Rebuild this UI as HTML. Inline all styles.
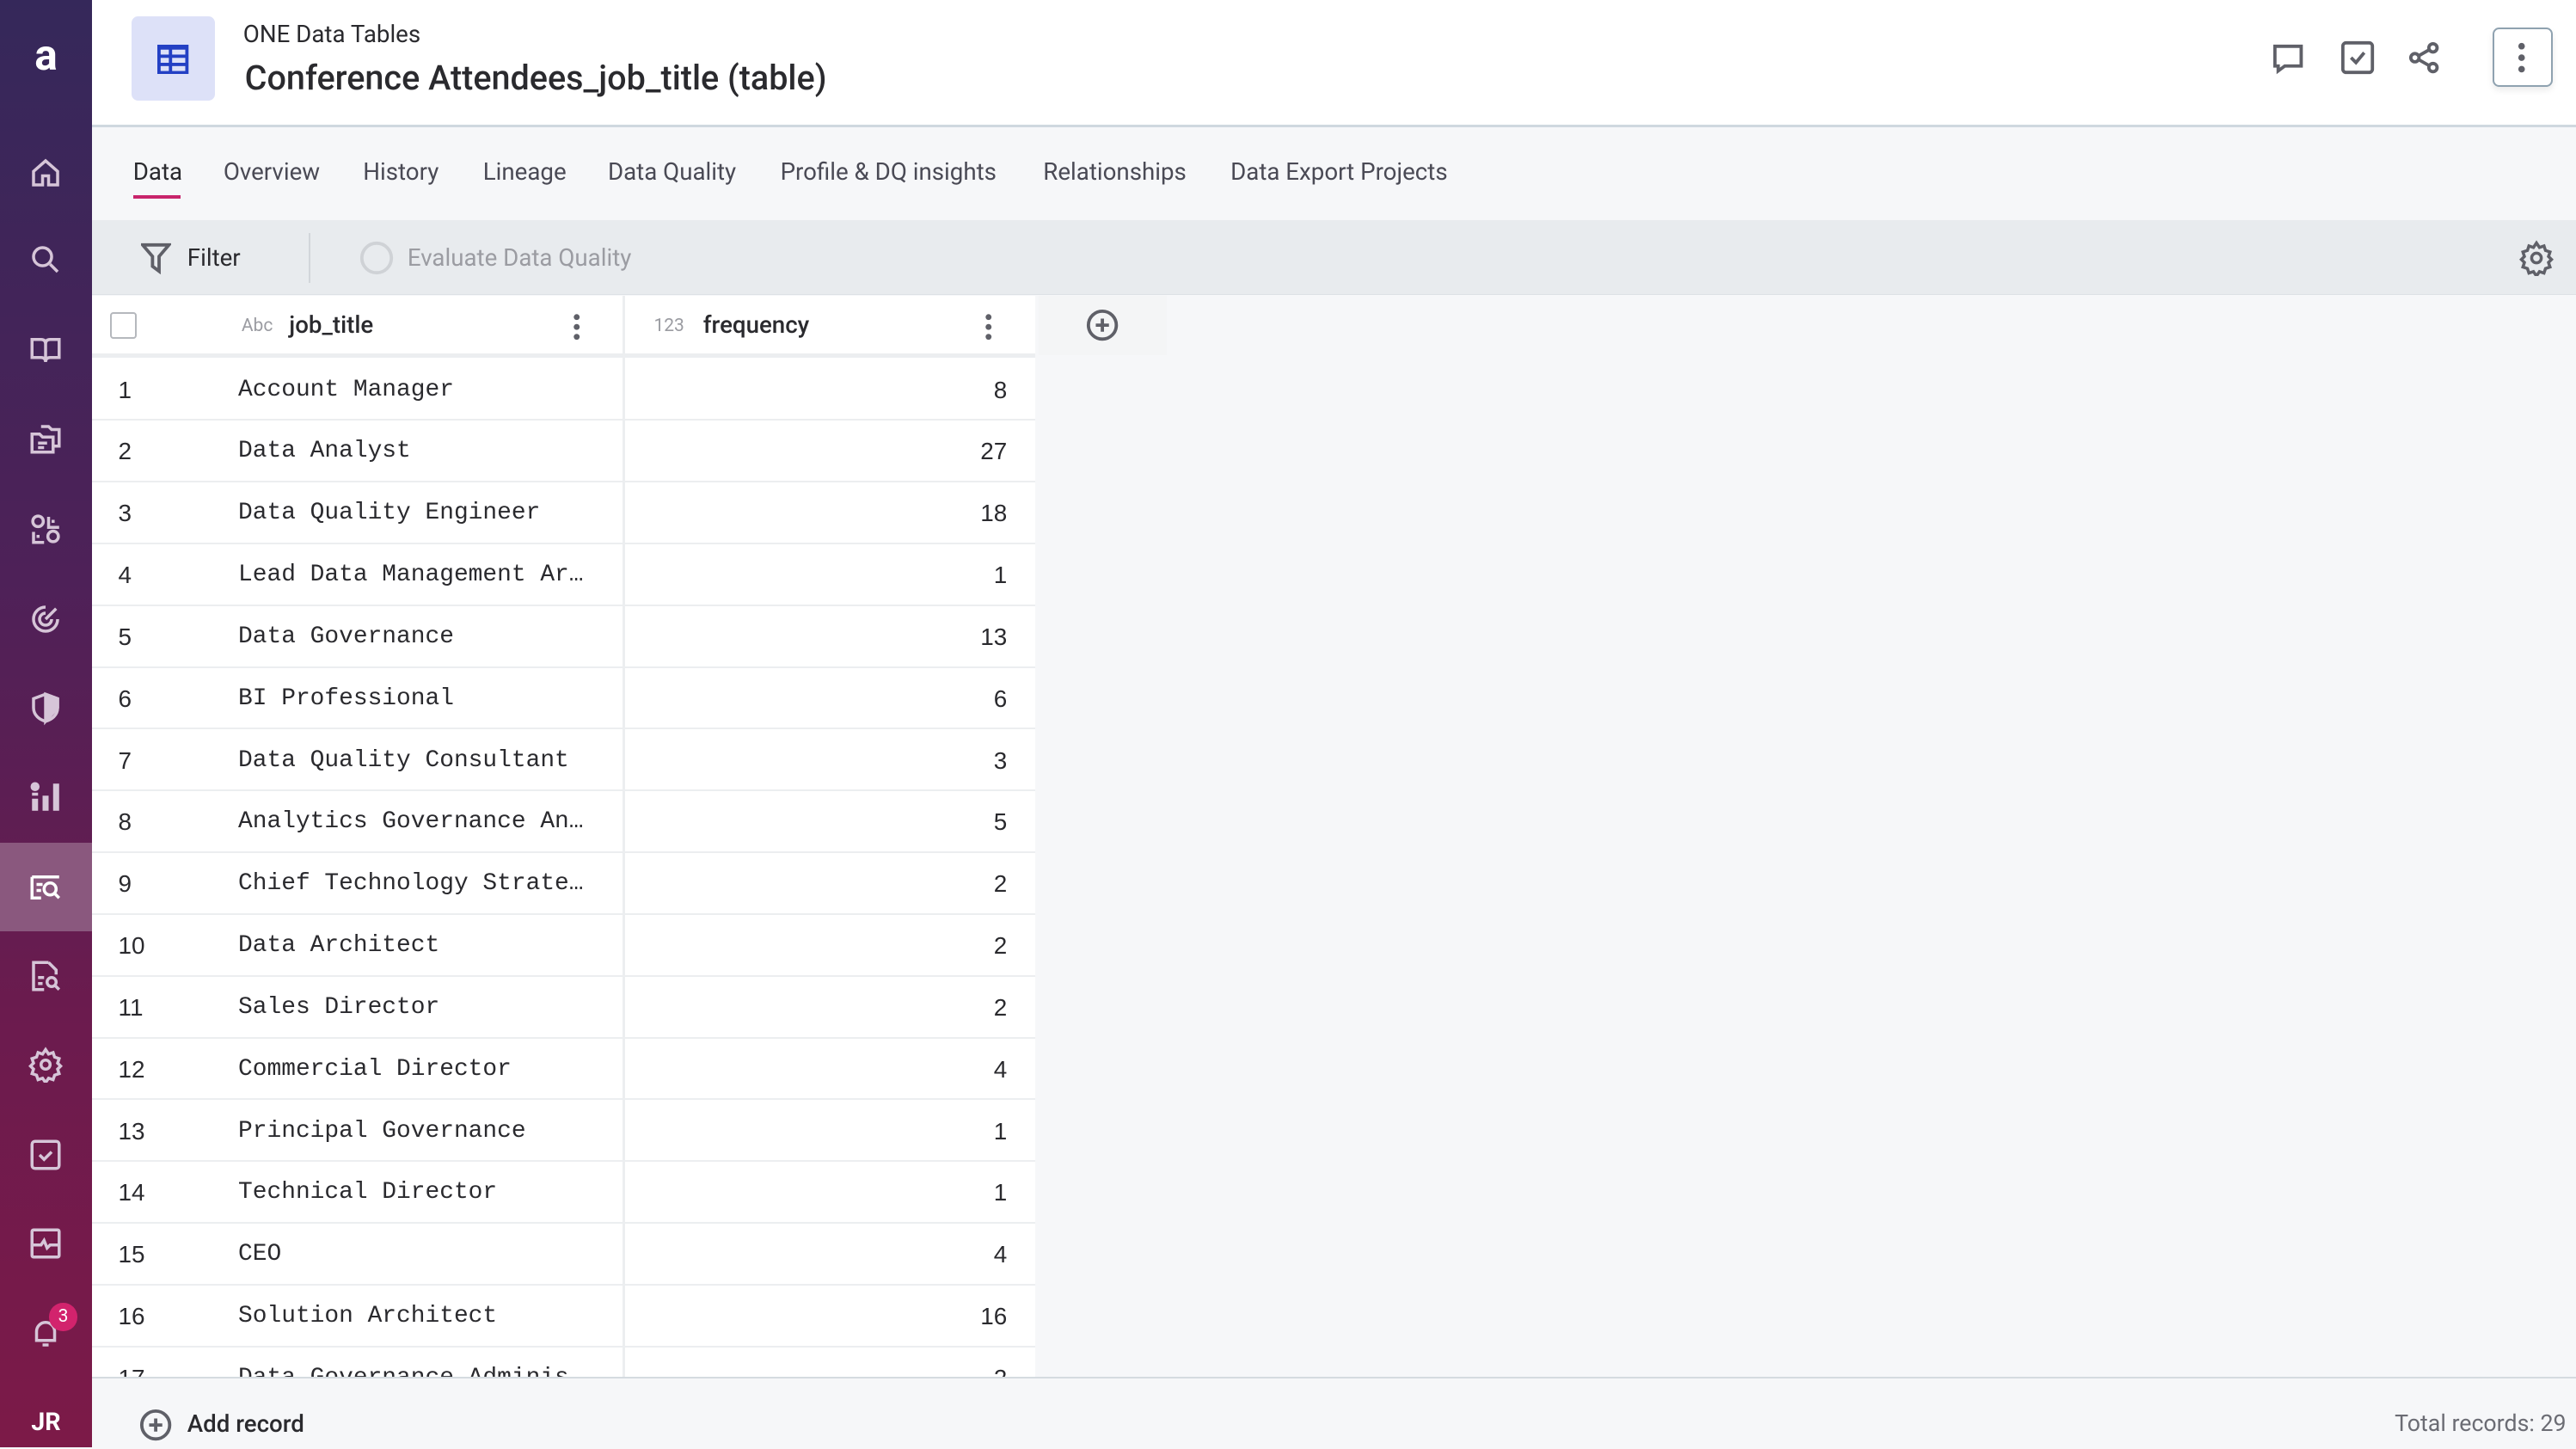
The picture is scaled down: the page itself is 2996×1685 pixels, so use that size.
<!DOCTYPE html>
<html><head><meta charset="utf-8"><style>
html,body{margin:0;padding:0;}
body{width:1568px;height:881px;zoom:1.91071;overflow:hidden;position:relative;font-family:"Roboto","Liberation Sans",sans-serif;background:#f6f7f9;color:#2a2a2e;}
.side{position:absolute;left:0;top:0;width:56px;height:881px;background:linear-gradient(180deg,#35285a 0%,#4e2158 40%,#6b1b4e 70%,#7c1a48 100%);}
.side .ic{position:absolute;left:0;width:56px;height:54px;display:flex;align-items:center;justify-content:center;}
.side svg{width:22px;height:22px;fill:none;stroke:#d6c5d8;stroke-width:2;}
.act{background:#8a587e;}
.hdr{position:absolute;left:56px;top:0;right:0;height:76px;background:#fff;border-bottom:2px solid #cfd8df;}
.tabs{position:absolute;left:56px;top:78px;right:0;height:56px;background:#f6f7f9;}
.tabs span{position:absolute;top:18px;font-size:14.5px;color:#4a4a55;}
.tb{position:absolute;left:56px;top:134px;right:0;height:45px;background:#e8ebee;border-bottom:1px solid #dde1e5;}
.tbl{position:absolute;left:56px;top:180px;width:574px;height:658px;background:#fff;overflow:hidden;}
.row{position:absolute;left:0;width:574px;height:37px;border-bottom:1.5px solid #eceef0;font-family:"Liberation Mono",monospace;font-size:14.6px;color:#2a2a2e;}
.row .n{position:absolute;left:16px;top:11px;font-family:"Liberation Sans",sans-serif;}
.row .t{position:absolute;left:89px;top:11px;}
.row .v{position:absolute;right:17px;top:11px;font-family:"Liberation Sans",sans-serif;}
.vl{position:absolute;left:323px;top:0;width:1.5px;height:658px;background:#eceef0;}
.foot{position:absolute;left:56px;top:838px;right:0;height:43px;background:#f6f7f9;border-top:1.5px solid #d5dbe0;}
.g{fill:none;stroke:#5f6068;stroke-width:2;}
</style></head><body>
<div class="side">
 <div style="position:absolute;left:0;top:14px;width:56px;text-align:center;color:#fff;font-size:26px;font-weight:bold;line-height:40px;">a</div>
 <div class="ic" style="top:78px"><svg viewBox="0 0 24 24"><path d="M4 11L12 4l8 7v9h-6v-6h-4v6H4z"/></svg></div>
 <div class="ic" style="top:131px"><svg viewBox="0 0 24 24"><circle cx="10" cy="10" r="6"/><path d="M15 15l5 5"/></svg></div>
 <div class="ic" style="top:186px"><svg viewBox="0 0 24 24"><path d="M3 5h6c2 0 3 1 3 3v12c0-2-1-3-3-3H3zM21 5h-6c-2 0-3 1-3 3v12c0-2 1-3 3-3h6z"/></svg></div>
 <div class="ic" style="top:240px"><svg viewBox="0 0 24 24"><path d="M9 4h5l2 2h5v11h-4M3 9h5l2 2h7v10H3z M7 15h6M7 18h4"/></svg></div>
 <div class="ic" style="top:295px"><svg viewBox="0 0 24 24"><circle cx="7" cy="7" r="3.5"/><circle cx="17" cy="17" r="3.5"/><path d="M14 4v7h7M4 14v7h7M17 6v2M7 16v2"/></svg></div>
 <div class="ic" style="top:350px"><svg viewBox="0 0 24 24"><path d="M20 12a8 8 0 1 1-8-8M16 12a4 4 0 1 1-4-4M12 12l7-7"/></svg></div>
 <div class="ic" style="top:404px"><svg viewBox="0 0 24 24"><path d="M12 3l8 3v6c0 5-4 8-8 9-4-1-8-4-8-9V6z"/><path d="M12 3v18l8-9V6z" fill="#d6c5d8"/></svg></div>
 <div class="ic" style="top:458px"><svg viewBox="0 0 24 24" style="stroke:none;fill:#d6c5d8"><circle cx="5" cy="5" r="3"/><rect x="3" y="9" width="4" height="2"/><rect x="3" y="13" width="4" height="8"/><rect x="10" y="11" width="4" height="10"/><rect x="17" y="3" width="4" height="18"/></svg></div>
 <div class="ic act" style="top:513px"><svg viewBox="0 0 24 24" style="stroke:#fff"><path d="M3 5h18M3 5v14h6M6 10h4M6 14h3"/><circle cx="15" cy="13" r="4"/><path d="M18 16l3 3"/></svg></div>
 <div class="ic" style="top:567px"><svg viewBox="0 0 24 24"><path d="M14 3H4v18h7M14 3l5 5v3M7 13h4M7 17h3"/><circle cx="16" cy="16" r="3"/><path d="M18 18l3 3"/></svg></div>
 <div class="ic" style="top:621px"><svg viewBox="0 0 24 24"><circle cx="12" cy="12" r="3"/><path d="M12 2l2 3 3-1 1 3 3 1-1 3 2 2-2 2 1 3-3 1-1 3-3-1-2 3-2-3-3 1-1-3-3-1 1-3-2-2 2-2-1-3 3-1 1-3 3 1z"/></svg></div>
 <div class="ic" style="top:676px"><svg viewBox="0 0 24 24"><rect x="3" y="3" width="18" height="18" rx="2"/><path d="M8 12l3 3 5-5"/></svg></div>
 <div class="ic" style="top:730px"><svg viewBox="0 0 24 24"><rect x="3" y="3" width="18" height="18" rx="1"/><path d="M3 13h6l2-3 2 5 2-2h6"/></svg></div>
 <div class="ic" style="top:784px"><svg viewBox="0 0 24 24"><path d="M6 17V11a6 6 0 0 1 12 0v6H5h14M10 20h4"/></svg></div>
 <div style="position:absolute;left:30px;top:793px;width:17px;height:17px;border-radius:50%;background:#d2236d;color:#fff;font-size:11px;text-align:center;line-height:17px;">3</div>
 <div style="position:absolute;left:0;top:856px;width:56px;text-align:center;color:#fff;font-size:15px;font-weight:bold;">JR</div>
</div>
<div class="hdr">
 <div style="position:absolute;left:24px;top:10px;width:51px;height:51px;border-radius:4px;background:#dde1f8;"></div>
 <svg style="position:absolute;left:40px;top:27px" width="19" height="18" viewBox="0 0 19 18"><rect x="0" y="0" width="19" height="18" fill="#2340c4"/><g fill="#dde1f8"><rect x="2" y="3" width="5" height="3"/><rect x="9" y="3" width="8" height="3"/><rect x="2" y="8" width="5" height="3"/><rect x="9" y="8" width="8" height="3"/><rect x="2" y="13" width="5" height="3"/><rect x="9" y="13" width="8" height="3"/></g></svg>
 <div style="position:absolute;left:92px;top:12px;font-size:14.5px;color:#2a2a2e;">ONE Data Tables</div>
 <div style="position:absolute;left:93px;top:35px;font-size:20.7px;color:#2a2a2e;font-weight:500;">Conference Attendees_job_title (table)</div>
 <svg style="position:absolute;left:1327px;top:26px" width="20" height="20" viewBox="0 0 20 20" class="g"><path d="M2 2h16v12H8l-4 3v-3H2z"/></svg>
 <svg style="position:absolute;left:1368px;top:24px" width="22" height="22" viewBox="0 0 22 22" class="g"><rect x="2" y="2" width="18" height="18" rx="2"/><path d="M7 11l3 3 5-6"/></svg>
 <svg style="position:absolute;left:1410px;top:25px" width="20" height="20" viewBox="0 0 20 20" class="g"><circle cx="4" cy="10" r="2.5"/><circle cx="15" cy="4" r="2.5"/><circle cx="15" cy="16" r="2.5"/><path d="M6 9l7-4M6 11l7 4"/></svg>
 <div style="position:absolute;left:1461px;top:17px;width:35px;height:34px;border:1.5px solid #8fa2b0;border-radius:4px;background:#fff;box-shadow:0 2px 4px rgba(0,0,0,.08);"></div>
 <svg style="position:absolute;left:1476px;top:25px" width="6" height="20" viewBox="0 0 6 20" fill="#5f6068"><circle cx="3" cy="3" r="2"/><circle cx="3" cy="10" r="2"/><circle cx="3" cy="17" r="2"/></svg>
</div>
<div class="tabs">
 <span style="left:25px;color:#2a2a2e;">Data</span>
 <div style="position:absolute;left:25px;top:41px;width:29px;height:2px;background:#c8246b;"></div>
 <span style="left:80px">Overview</span><span style="left:165px">History</span><span style="left:238px">Lineage</span><span style="left:314px">Data Quality</span><span style="left:419px">Profile &amp; DQ insights</span><span style="left:579px">Relationships</span><span style="left:693px">Data Export Projects</span>
</div>
<div class="tb">
 <svg style="position:absolute;left:30px;top:13px" width="18" height="20" viewBox="0 0 18 20" class="g"><path d="M1 2h16l-6 7v9l-4-3V9z"/></svg>
 <div style="position:absolute;left:58px;top:14px;font-size:14.5px;color:#2a2a2e;">Filter</div>
 <div style="position:absolute;left:132px;top:8px;width:1px;height:30px;background:#d2d6da;"></div>
 <svg style="position:absolute;left:162px;top:12px" width="22" height="22" viewBox="0 0 22 22"><circle cx="11" cy="11" r="9" fill="none" stroke="#cfd2d6" stroke-width="2"/></svg>
 <div style="position:absolute;left:192px;top:14px;font-size:14.5px;color:#9b9ca2;">Evaluate Data Quality</div>
 <svg style="position:absolute;left:1477px;top:12px" width="22" height="22" viewBox="0 0 24 24" class="g"><circle cx="12" cy="12" r="3.2"/><path d="M12 2l2 3 3-1 1 3 3 1-1 3 2 2-2 2 1 3-3 1-1 3-3-1-2 3-2-3-3 1-1-3-3-1 1-3-2-2 2-2-1-3 3-1 1-3 3 1z"/></svg>
</div>
<div style="position:absolute;left:632px;top:180px;width:78px;height:36px;background:#f4f5f6;"></div>
<svg style="position:absolute;left:661px;top:188px" width="20" height="20" viewBox="0 0 20 20" class="g"><circle cx="10" cy="10" r="8.5"/><path d="M10 6v8M6 10h8"/></svg>
<div class="tbl">
 <div style="position:absolute;left:0;top:0;width:574px;height:35px;border-bottom:3px solid #eceef0;background:#fff;">
  <div style="position:absolute;left:11px;top:10px;width:14px;height:14px;border:1.5px solid #b5b8bd;border-radius:2px;"></div>
  <div style="position:absolute;left:91px;top:12px;font-size:11px;color:#9b9ca2;">Abc</div>
  <div style="position:absolute;left:120px;top:9px;font-size:14.5px;font-weight:500;">job_title</div>
  <svg style="position:absolute;left:292px;top:10px" width="6" height="18" viewBox="0 0 6 18" fill="#5f6068"><circle cx="3" cy="3" r="1.8"/><circle cx="3" cy="9" r="1.8"/><circle cx="3" cy="15" r="1.8"/></svg>
  <div style="position:absolute;left:342px;top:12px;font-size:11px;color:#9b9ca2;">123</div>
  <div style="position:absolute;left:372px;top:9px;font-size:14.5px;font-weight:500;">frequency</div>
  <svg style="position:absolute;left:543px;top:10px" width="6" height="18" viewBox="0 0 6 18" fill="#5f6068"><circle cx="3" cy="3" r="1.8"/><circle cx="3" cy="9" r="1.8"/><circle cx="3" cy="15" r="1.8"/></svg>
 </div>
 <div class="row" style="top:38px"><span class="n">1</span><span class="t">Account Manager</span><span class="v">8</span></div>
 <div class="row" style="top:75.6px"><span class="n">2</span><span class="t">Data Analyst</span><span class="v">27</span></div>
 <div class="row" style="top:113.2px"><span class="n">3</span><span class="t">Data Quality Engineer</span><span class="v">18</span></div>
 <div class="row" style="top:150.8px"><span class="n">4</span><span class="t">Lead Data Management Ar…</span><span class="v">1</span></div>
 <div class="row" style="top:188.4px"><span class="n">5</span><span class="t">Data Governance</span><span class="v">13</span></div>
 <div class="row" style="top:226px"><span class="n">6</span><span class="t">BI Professional</span><span class="v">6</span></div>
 <div class="row" style="top:263.6px"><span class="n">7</span><span class="t">Data Quality Consultant</span><span class="v">3</span></div>
 <div class="row" style="top:301.2px"><span class="n">8</span><span class="t">Analytics Governance An…</span><span class="v">5</span></div>
 <div class="row" style="top:338.8px"><span class="n">9</span><span class="t">Chief Technology Strate…</span><span class="v">2</span></div>
 <div class="row" style="top:376.4px"><span class="n">10</span><span class="t">Data Architect</span><span class="v">2</span></div>
 <div class="row" style="top:414px"><span class="n">11</span><span class="t">Sales Director</span><span class="v">2</span></div>
 <div class="row" style="top:451.6px"><span class="n">12</span><span class="t">Commercial Director</span><span class="v">4</span></div>
 <div class="row" style="top:489.2px"><span class="n">13</span><span class="t">Principal Governance</span><span class="v">1</span></div>
 <div class="row" style="top:526.8px"><span class="n">14</span><span class="t">Technical Director</span><span class="v">1</span></div>
 <div class="row" style="top:564.4px"><span class="n">15</span><span class="t">CEO</span><span class="v">4</span></div>
 <div class="row" style="top:602px"><span class="n">16</span><span class="t">Solution Architect</span><span class="v">16</span></div>
 <div class="row" style="top:639.6px"><span class="n">17</span><span class="t">Data Governance Adminis…</span><span class="v">2</span></div>
 <div class="vl"></div>
</div>
<div class="foot">
 <svg style="position:absolute;left:29px;top:18px" width="20" height="20" viewBox="0 0 20 20" class="g"><circle cx="10" cy="10" r="8.5"/><path d="M10 6v8M6 10h8"/></svg>
 <div style="position:absolute;left:58px;top:19px;font-size:14.5px;font-weight:500;">Add record</div>
 <div style="position:absolute;right:6px;top:19px;font-size:14px;color:#6b6c74;">Total records: 29</div>
</div>
</body></html>
